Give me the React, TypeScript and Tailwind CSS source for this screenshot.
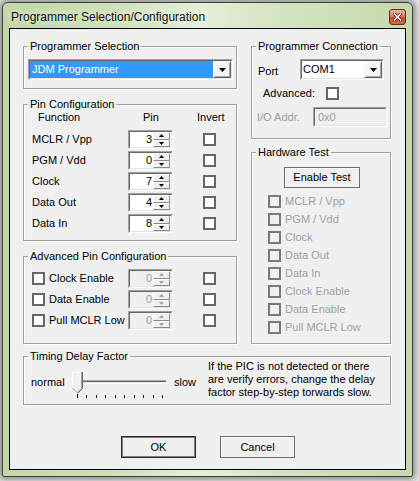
import React from "react";

function Group({ label, className, children }: { label: string; className?: string; children?: React.ReactNode }) {
  return (
    <div className={`border border-[#a0a0a0] shadow-[inset_1px_1px_0_#ffffff,1px_1px_0_#ffffff] ${className ?? ""}`}>
      <div className="-mt-[7px] ml-[4px] px-[2px] w-fit bg-[#f0f0f0] leading-[13px] whitespace-nowrap">{label}</div>
      {children}
    </div>
  );
}

function Check({ disabled }: { disabled?: boolean }) {
  return (
    <div
      className={`w-[13px] h-[13px] shrink-0 border-2 ${
        disabled ? "border-[#7a7a7a] bg-[#f0f0f0]" : "border-[#666666] bg-white"
      }`}
    />
  );
}

function Tri({ up, color }: { up?: boolean; color: string }) {
  return (
    <svg width="5" height="3" viewBox="0 0 5 3" className="block">
      {up ? <path d="M2.5 0L5 3H0Z" fill={color} /> : <path d="M0 0H5L2.5 3Z" fill={color} />}
    </svg>
  );
}

function SpinBtn({ up, disabled }: { up?: boolean; disabled?: boolean }) {
  return (
    <div className="flex-1 flex items-center justify-center bg-[#f0f0f0] border border-t-white border-l-white border-b-[#8a8a8a] border-r-[#8a8a8a]">
      <Tri up={up} color={disabled ? "#a0a0a0" : "#000000"} />
    </div>
  );
}

function Spin({ value, disabled }: { value: string; disabled?: boolean }) {
  return (
    <div className="w-[45px] h-[19px] shrink-0 border border-t-[#a0a0a0] border-l-[#a0a0a0] border-b-white border-r-white">
      <div
        className={`h-full flex pr-[1px] border border-t-[#696969] border-l-[#696969] border-b-[#e3e3e3] border-r-[#e3e3e3] ${
          disabled ? "bg-[#f0f0f0]" : "bg-white"
        }`}
      >
        <div className={`flex-1 flex items-center justify-end pr-[1px] ${disabled ? "text-[#a0a0a0]" : "text-black"}`}>
          {value}
        </div>
        <div className="w-[17px] flex flex-col">
          <SpinBtn up disabled={disabled} />
          <SpinBtn disabled={disabled} />
        </div>
      </div>
    </div>
  );
}

function Combo({ width, text, selected }: { width: string; text: string; selected?: boolean }) {
  return (
    <div className={`${width} h-[21px] shrink-0 border border-t-[#a0a0a0] border-l-[#a0a0a0] border-b-white border-r-white`}>
      <div className="h-full flex bg-white border border-t-[#696969] border-l-[#696969] border-b-[#e3e3e3] border-r-[#e3e3e3]">
        <div
          className={`flex-1 flex items-center whitespace-nowrap ${
            selected ? "bg-[#3399ff] text-white pl-[2px]" : "text-black pl-[1px]"
          }`}
        >
          {text}
        </div>
        <div className="w-[18px] h-full flex items-center justify-center bg-[#f4f4f4] border border-t-[#f0f0f0] border-l-[#f0f0f0] border-b-[#696969] border-r-[#696969] shadow-[inset_1px_1px_0_#ffffff,inset_-1px_-1px_0_#a0a0a0]">
          <svg width="7" height="4" viewBox="0 0 7 4" className="block">
            <path d="M0 0H7L3.5 4Z" fill="#000000" />
          </svg>
        </div>
      </div>
    </div>
  );
}

function Slider() {
  const ticks = Array.from({ length: 10 }, (_, i) => 7 + i * 9.44);
  return (
    <svg width="100" height="30" viewBox="0 0 100 30" className="block shrink-0 mt-[10px]">
      <rect x="4" y="10" width="92" height="1" fill="#a0a0a0" />
      <rect x="4" y="11" width="92" height="1" fill="#696969" />
      <rect x="4" y="12" width="92" height="1" fill="#e3e3e3" />
      <rect x="4" y="13" width="92" height="1" fill="#ffffff" />
      <path d="M2 2H12V18L7 23L2 18Z" fill="#f0f0f0" />
      <path d="M2.5 18V2.5H11.5" fill="none" stroke="#ffffff" strokeWidth="1" />
      <path d="M2.5 18.2L7 22.7" fill="none" stroke="#a0a0a0" strokeWidth="1" />
      <path d="M11.5 2V18.2L7 22.7" fill="none" stroke="#a0a0a0" strokeWidth="1" />
      <path d="M12.5 2V18.5L7.5 23.5" fill="none" stroke="#696969" strokeWidth="1" />
      {ticks.map((x, i) => (
        <rect key={i} x={Math.round(x)} y={i === 0 ? 24 : 25} width="1" height={i === 0 ? 4 : 3} fill="#000000" />
      ))}
    </svg>
  );
}

function Btn({ children, def, className }: { children: React.ReactNode; def?: boolean; className?: string }) {
  return (
    <div
      className={`flex items-center justify-center bg-[#f0f0f0] ${
        def
          ? "border border-[#2e2e2e] shadow-[inset_0_0_0_1px_#7d7d7d]"
          : "border border-[#707070] shadow-[inset_1px_1px_0_#ffffff]"
      } ${className ?? ""}`}
    >
      {children}
    </div>
  );
}

export default function App() {
  const pins = [
    { label: "MCLR / Vpp", v: "3" },
    { label: "PGM / Vdd", v: "0" },
    { label: "Clock", v: "7" },
    { label: "Data Out", v: "4" },
    { label: "Data In", v: "8" },
  ];
  const adv = ["Clock Enable", "Data Enable", "Pull MCLR Low"];
  const hw = ["MCLR / Vpp", "PGM / Vdd", "Clock", "Data Out", "Data In", "Clock Enable", "Data Enable", "Pull MCLR Low"];

  return (
    <div className="w-[419px] h-[481px] overflow-hidden bg-[#e4e4e4] pt-[2px] pl-[2px] font-['Liberation_Sans',Arial,sans-serif] text-[11px] leading-[13px] text-black">
      <div className="w-[411px] h-[475px] flex flex-col border border-[#3c4636] rounded-t-[6px] rounded-b-[2px] px-[6px] pb-[6px] bg-[linear-gradient(90deg,#c2d7a8_0%,#d0e1bb_28%,#e6efd9_48%,#d4e4c1_68%,#c5d9ac_100%)] shadow-[0_0_6px_2px_rgba(0,0,0,0.45)]">
        {/* title bar */}
        <div className="h-[25px] shrink-0 flex items-center pt-[3px] pl-[2px]">
          <div className="flex-1 text-[12px] leading-[15px] text-[#111111] whitespace-nowrap [text-shadow:0_0_7px_rgba(255,255,255,0.95)]">
            Programmer Selection/Configuration
          </div>
          <div className="w-[17px] h-[16px] rounded-[3px] border border-[#6e2a1c] bg-[linear-gradient(180deg,#eeb3a2_0%,#dc7c63_45%,#c9482c_55%,#d1664a_100%)] flex items-center justify-center">
            <svg width="9" height="8" viewBox="0 0 9 8" className="block">
              <path d="M1.5 1L7.5 7M7.5 1L1.5 7" stroke="#5a1a0e" strokeWidth="3" strokeLinecap="square" />
              <path d="M1.5 1L7.5 7M7.5 1L1.5 7" stroke="#ffffff" strokeWidth="1.6" strokeLinecap="square" />
            </svg>
          </div>
        </div>

        {/* client area */}
        <div className="h-[442px] shrink-0 flex flex-col border border-black bg-[#f0f0f0] pl-[13px] pt-[17px]">
          <div className="flex gap-[14px]">
            {/* left column */}
            <div className="w-[214px] flex flex-col">
              <Group label="Programmer Selection" className="h-[43px]">
                <div className="mt-[6px] ml-[4px]">
                  <Combo width="w-[205px]" text="JDM Programmer" selected />
                </div>
              </Group>

              <Group label="Pin Configuration" className="h-[137px] mt-[15px]">
                <div className="flex pl-[14px]">
                  <div className="w-[105px]">Function</div>
                  <div className="w-[54px]">Pin</div>
                  <div>Invert</div>
                </div>
                <div className="mt-[5px] flex flex-col">
                  {pins.map((p) => (
                    <div key={p.label} className="h-[21px] flex items-center pl-[8px]">
                      <div className="w-[96px] whitespace-nowrap">{p.label}</div>
                      <Spin value={p.v} />
                      <div className="ml-[30px]">
                        <Check />
                      </div>
                    </div>
                  ))}
                </div>
              </Group>

              <Group label="Advanced Pin Configuration" className="h-[88px] mt-[15px]">
                <div className="mt-[5px] flex flex-col">
                  {adv.map((a) => (
                    <div key={a} className="h-[21px] flex items-center pl-[8px]">
                      <div className="w-[96px] flex items-center gap-[4px] whitespace-nowrap">
                        <Check />
                        <span>{a}</span>
                      </div>
                      <Spin value="0" disabled />
                      <div className="ml-[30px]">
                        <Check />
                      </div>
                    </div>
                  ))}
                </div>
              </Group>
            </div>

            {/* right column */}
            <div className="w-[140px] flex flex-col">
              <Group label="Programmer Connection" className="h-[93px]">
                <div className="mt-[6px] flex items-center pl-[6px]">
                  <div className="w-[42px] pt-[4px]">Port</div>
                  <Combo width="w-[84px]" text="COM1" />
                </div>
                <div className="mt-[7px] h-[13px] flex items-center pl-[11px]">
                  <div className="w-[63px] whitespace-nowrap">Advanced:</div>
                  <Check />
                </div>
                <div className="mt-[7px] flex items-center pl-[5px]">
                  <div className="w-[56px] whitespace-nowrap text-[#9c9c9c]">I/O Addr.</div>
                  <div className="w-[74px] h-[20px] border border-t-[#a0a0a0] border-l-[#a0a0a0] border-b-white border-r-white">
                    <div className="h-full flex items-center pl-[3px] bg-[#f0f0f0] text-[#9c9c9c] border border-t-[#696969] border-l-[#696969] border-b-[#e3e3e3] border-r-[#e3e3e3]">
                      0x0
                    </div>
                  </div>
                </div>
              </Group>

              <Group label="Hardware Test" className="h-[192px] mt-[13px]">
                <div className="mt-[8px] ml-[32px]">
                  <Btn className="w-[76px] h-[21px]">Enable Test</Btn>
                </div>
                <div className="mt-[4px] flex flex-col pl-[16px]">
                  {hw.map((h) => (
                    <div key={h} className="h-[18px] flex items-center gap-[4px] whitespace-nowrap text-[#a0a0a0]">
                      <Check disabled />
                      <span>{h}</span>
                    </div>
                  ))}
                </div>
              </Group>
            </div>
          </div>

          <Group label="Timing Delay Factor" className="w-[368px] h-[49px] mt-[12px]">
            <div className="-mt-[3px] flex items-start pl-[7px]">
              <div className="w-[39px] mt-[16px]">normal</div>
              <Slider />
              <div className="w-[38px] mt-[16px] pl-[4px]">slow</div>
              <div className="whitespace-nowrap leading-[13px]">
                If the PIC is not detected or there
                <br />
                are verify errors, change the delay
                <br />
                factor step-by-step torwards slow.
              </div>
            </div>
          </Group>

          <div className="mt-[31px] ml-[98px] flex gap-[24px]">
            <Btn def className="w-[75px] h-[22px]">
              OK
            </Btn>
            <Btn className="w-[75px] h-[22px]">Cancel</Btn>
          </div>
        </div>
      </div>
    </div>
  );
}
